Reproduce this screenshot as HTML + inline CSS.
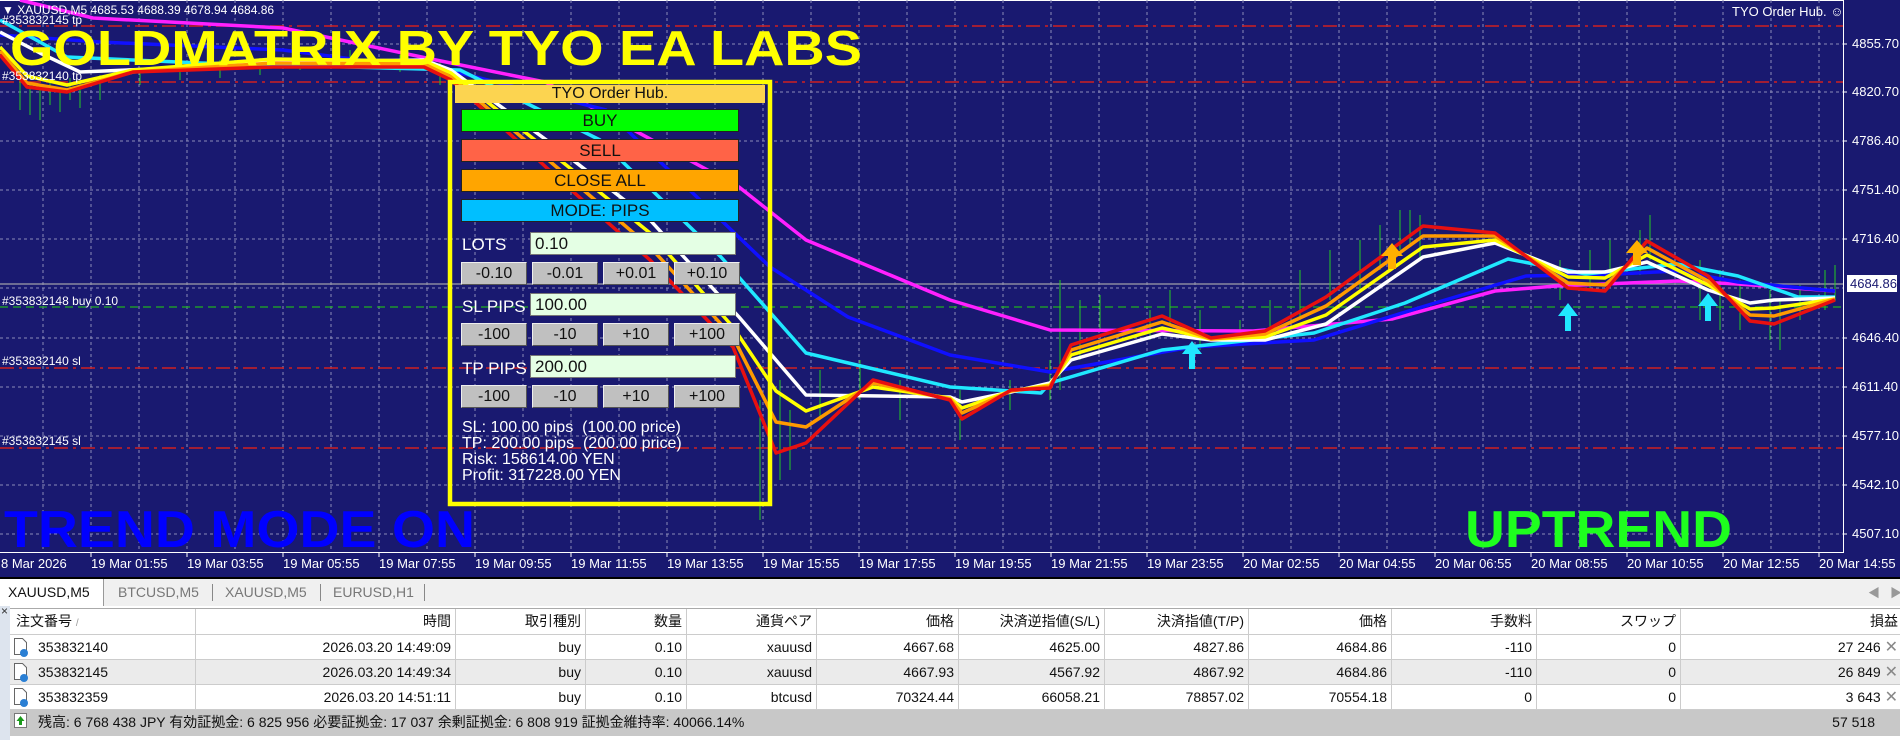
<!DOCTYPE html>
<html><head><meta charset="utf-8">
<style>
*{margin:0;padding:0;box-sizing:border-box}
body{width:1900px;height:740px;overflow:hidden;background:#fff;font-family:"Liberation Sans","Noto Sans CJK JP",sans-serif;position:relative}
#chart{position:absolute;left:0;top:0}
.pn{position:absolute;font-family:"Liberation Sans",sans-serif;color:#111;text-align:center;font-size:17px}
.btn{position:absolute;left:461px;width:278px;height:23px;border:1px solid #222;line-height:21px}
.sb{position:absolute;width:66px;height:23px;background:#c0c0c0;border:1px solid #555;border-top-color:#eee;border-left-color:#eee;line-height:21px;font-size:16px}
.ed{position:absolute;left:530px;width:206px;height:23px;background:#e4ffe4;border:1px solid #777;text-align:left;padding-left:4px;line-height:22px;font-size:17px}
.lb{position:absolute;left:462px;color:#fff;font-size:17px}
#tabs{position:absolute;left:0;top:577px;width:1900px;height:29px;background:#f0f0f0;border-top:2px solid #000;font-size:14px;color:#777}
#tabs span{position:absolute;top:5px}
#tbl{position:absolute;left:10px;top:608px;width:1890px;font-size:14px;color:#111}
.row{position:absolute;left:0;width:1890px;height:25px;border-bottom:1px solid #ccc}
.row div{position:absolute;top:0;height:25px;line-height:25px;text-align:right;border-right:1px solid #ccc;padding-right:4px}
</style></head><body>
<svg id="chart" width="1900" height="577" xmlns="http://www.w3.org/2000/svg" font-family="Liberation Sans, sans-serif">
<rect x="0" y="0" width="1900" height="577" fill="#191970"/>
<line x1="0" y1="0.5" x2="1843" y2="0.5" stroke="#fff"/>
<g stroke="#8a8ab8" stroke-width="1" stroke-dasharray="3,3">
<path d="M43 0V552M91 0V552M139 0V552M187 0V552M235 0V552M283 0V552M331 0V552M379 0V552M427 0V552M475 0V552M523 0V552M571 0V552M619 0V552M667 0V552M715 0V552M763 0V552M811 0V552M859 0V552M907 0V552M955 0V552M1003 0V552M1051 0V552M1099 0V552M1147 0V552M1195 0V552M1243 0V552M1291 0V552M1339 0V552M1387 0V552M1435 0V552M1483 0V552M1531 0V552M1579 0V552M1627 0V552M1675 0V552M1723 0V552M1771 0V552M1819 0V552"/>
<path d="M0 44H1843M0 92H1843M0 141H1843M0 190H1843M0 239H1843M0 288H1843M0 338H1843M0 387H1843M0 436H1843M0 485H1843M0 534H1843"/>
</g>
<g stroke="#d02020" stroke-width="1.5" stroke-dasharray="14,5,3,5" fill="none">
<path d="M0 26H1843M0 82H1843M0 368H1843M0 448H1843"/>
</g>
<path d="M0 307H1843" stroke="#20b020" stroke-width="1.3" stroke-dasharray="8,5"/>
<path d="M0 284H1843" stroke="#a0a0a8" stroke-width="1.3"/>
<!-- candles -->
<g stroke="#22cc22" stroke-width="1">
<path d="M20 80V110M30 85V115M40 90V120M50 80V105M60 90V112M70 78V100M80 82V108M100 75V100M140 68V85M180 60V80M220 60V78M260 58V75M300 55V70M350 50V65M400 55V72M440 62V85M760 400V520M770 420V500M780 380V480M790 410V470M820 370V420M860 360V400M900 380V420M960 390V440M1010 380V410M1050 360V400M1060 280V390M1080 300V360M1100 295V330M1150 310V340M1170 290V325M1200 310V350M1240 320V345M1270 300V340M1300 270V320M1330 250V300M1360 240V290M1380 225V270M1400 210V250M1410 210V245M1420 215V260M1560 260V300M1590 250V290M1610 240V285M1640 230V275M1650 215V260M1700 260V320M1720 270V330M1740 280V330M1770 290V340M1780 300V350M1800 285V320M1825 270V310M1835 265V300"/>
</g>
<g fill="none" stroke-width="3.5" stroke-linejoin="round">
<polyline stroke="#ff20ff" points="20,0 93,18 283,28 436,60 545,82 739,187 806,240 950,300 1050,330 1253,331 1392,319 1495,291 1556,286 1677,281 1738,284 1835,291"/>
<polyline stroke="#1010ff" points="0,35 100,42 283,50 460,73 606,110 770,267 848,317 950,355 1050,372 1192,347 1314,340 1435,303 1526,276 1617,274 1677,271 1738,282 1835,291"/>
<polyline stroke="#20e8ff" points="0,20 67,57 200,63 460,70 600,140 721,257 806,353 950,387 1041,393 1050,383 1162,350 1314,333 1405,303 1508,259 1586,274 1677,264 1738,276 1798,297 1835,297"/>
<polyline stroke="#ffffff" points="0,32 40,53 80,72 200,67 273,62 424,60 451,70 560,150 650,220 739,317 806,395 950,397 962,402 1011,392 1050,383 1071,360 1162,334 1211,340 1265,340 1326,324 1423,257 1495,243 1568,272 1605,272 1647,262 1708,290 1750,303 1774,300 1835,298"/>
<polyline stroke="#ffff00" points="0,47 27,76 67,85 133,70 273,59 424,61 451,73 560,160 650,233 733,327 776,391 806,411 873,387 950,398 962,408 1011,391 1050,385 1071,355 1162,328 1211,339 1265,337 1326,315 1423,247 1495,240 1568,277 1605,278 1647,255 1708,285 1750,309 1774,308 1835,299"/>
<polyline stroke="#ff9a00" points="0,51 27,83 67,90 133,72 273,63 424,64 451,77 560,170 650,247 733,337 776,422 806,427 873,383 950,399 962,413 1011,391 1050,386 1071,350 1162,322 1211,339 1265,334 1326,306 1423,236 1495,236 1568,283 1605,285 1647,248 1708,281 1750,315 1774,316 1835,299"/>
<polyline stroke="#e81010" points="0,55 27,87 67,92 133,72 273,67 424,67 451,80 560,180 650,260 733,347 776,453 806,443 873,380 950,400 962,419 1011,390 1050,388 1071,345 1162,316 1211,338 1265,331 1326,297 1423,226 1495,233 1568,288 1605,291 1647,241 1708,276 1750,321 1774,324 1835,300"/>
</g>
<!-- arrows -->
<g fill="#20e8ff">
<path d="M1192 341l-10 13h7v15h6v-15h7z"/><path d="M1568 303l-10 13h7v15h6v-15h7z"/><path d="M1708 293l-10 13h7v15h6v-15h7z"/>
</g>
<g fill="#ffb000">
<path d="M1392 243l-11 13h7v13h8v-13h7z"/><path d="M1637 240l-11 13h7v12h8v-12h7z"/>
</g>
<!-- axis -->
<line x1="1843.5" y1="0" x2="1843.5" y2="552" stroke="#fff"/>
<line x1="0" y1="552.5" x2="1844" y2="552.5" stroke="#fff"/>
<g fill="#fff" font-size="13">
<text x="1852" y="48">4855.70</text><text x="1852" y="96">4820.70</text><text x="1852" y="145">4786.40</text><text x="1852" y="194">4751.40</text><text x="1852" y="243">4716.40</text><text x="1852" y="342">4646.40</text><text x="1852" y="391">4611.40</text><text x="1852" y="440">4577.10</text><text x="1852" y="489">4542.10</text><text x="1852" y="538">4507.10</text>
</g>
<rect x="1847" y="275" width="50" height="17" fill="#fff"/>
<text x="1850" y="288" font-size="13" fill="#191970">4684.86</text>
<g stroke="#fff"><path d="M1843 44h4M1843 92h4M1843 141h4M1843 190h4M1843 239h4M1843 338h4M1843 387h4M1843 436h4M1843 485h4M1843 534h4M91 552v5M187 552v5M283 552v5M379 552v5M475 552v5M571 552v5M667 552v5M763 552v5M859 552v5M955 552v5M1051 552v5M1147 552v5M1243 552v5M1339 552v5M1435 552v5M1531 552v5M1627 552v5M1723 552v5M1819 552v5"/></g>
<g fill="#fff" font-size="13">
<text x="1" y="568">8 Mar 2026</text><text x="91" y="568">19 Mar 01:55</text><text x="187" y="568">19 Mar 03:55</text><text x="283" y="568">19 Mar 05:55</text><text x="379" y="568">19 Mar 07:55</text><text x="475" y="568">19 Mar 09:55</text><text x="571" y="568">19 Mar 11:55</text><text x="667" y="568">19 Mar 13:55</text><text x="763" y="568">19 Mar 15:55</text><text x="859" y="568">19 Mar 17:55</text><text x="955" y="568">19 Mar 19:55</text><text x="1051" y="568">19 Mar 21:55</text><text x="1147" y="568">19 Mar 23:55</text><text x="1243" y="568">20 Mar 02:55</text><text x="1339" y="568">20 Mar 04:55</text><text x="1435" y="568">20 Mar 06:55</text><text x="1531" y="568">20 Mar 08:55</text><text x="1627" y="568">20 Mar 10:55</text><text x="1723" y="568">20 Mar 12:55</text><text x="1819" y="568">20 Mar 14:55</text>
</g>
<g fill="#fff" font-size="12">
<text x="2" y="14">▼ XAUUSD,M5  4685.53 4688.39 4678.94 4684.86</text>
<text x="2" y="24">#353832145 tp</text>
<text x="2" y="80">#353832140 tp</text>
<text x="2" y="305">#353832148 buy 0.10</text>
<text x="2" y="365">#353832140 sl</text>
<text x="2" y="445">#353832145 sl</text>
<text x="1732" y="16" font-size="13">TYO Order Hub. ☺</text>
</g>
<text x="10" y="65" font-size="49" font-weight="bold" fill="#ffff00" textLength="852" lengthAdjust="spacingAndGlyphs">GOLDMATRIX BY TYO EA LABS</text>
<text x="4" y="547" font-size="52" font-weight="bold" fill="#0000ff" textLength="471" lengthAdjust="spacingAndGlyphs">TREND MODE ON</text>
<text x="1465" y="547" font-size="52" font-weight="bold" fill="#1eff1e" textLength="267" lengthAdjust="spacingAndGlyphs">UPTREND</text>
<!-- panel frame -->
<rect x="450" y="82" width="320" height="422" fill="none" stroke="#ffff00" stroke-width="4.5"/>
<rect x="455" y="85" width="310" height="18" fill="#fcd450"/>
</svg>

<div class="pn" style="left:455px;top:84px;width:310px;height:19px;line-height:19px;font-size:16px">TYO Order Hub.</div>
<div class="pn btn" style="top:109px;background:#00ff00">BUY</div>
<div class="pn btn" style="top:139px;background:#ff6347">SELL</div>
<div class="pn btn" style="top:169px;background:#ffa500">CLOSE ALL</div>
<div class="pn btn" style="top:199px;background:#00bfff">MODE: PIPS</div>
<div class="pn lb" style="top:235px">LOTS</div>
<div class="pn ed" style="top:232px">0.10</div>
<div class="pn sb" style="left:461px;top:262px">-0.10</div><div class="pn sb" style="left:532px;top:262px">-0.01</div><div class="pn sb" style="left:603px;top:262px">+0.01</div><div class="pn sb" style="left:674px;top:262px">+0.10</div>
<div class="pn lb" style="top:297px">SL PIPS</div>
<div class="pn ed" style="top:293px">100.00</div>
<div class="pn sb" style="left:461px;top:323px">-100</div><div class="pn sb" style="left:532px;top:323px">-10</div><div class="pn sb" style="left:603px;top:323px">+10</div><div class="pn sb" style="left:674px;top:323px">+100</div>
<div class="pn lb" style="top:359px">TP PIPS</div>
<div class="pn ed" style="top:355px">200.00</div>
<div class="pn sb" style="left:461px;top:385px">-100</div><div class="pn sb" style="left:532px;top:385px">-10</div><div class="pn sb" style="left:603px;top:385px">+10</div><div class="pn sb" style="left:674px;top:385px">+100</div>
<div class="pn" style="left:462px;top:420px;color:#fff;text-align:left;font-size:16px;line-height:16px;white-space:pre">SL: 100.00 pips  (100.00 price)
TP: 200.00 pips  (200.00 price)
Risk: 158614.00 YEN
Profit: 317228.00 YEN</div>

<div id="tabs">
<div style="position:absolute;left:0;top:0;width:104px;height:27px;background:#fff;border-right:1px solid #999"></div>
<span style="left:8px;color:#111">XAUUSD,M5</span>
<span style="left:118px">BTCUSD,M5</span>
<div style="position:absolute;left:212px;top:5px;height:17px;border-left:1px solid #888"></div>
<span style="left:225px">XAUUSD,M5</span>
<div style="position:absolute;left:320px;top:5px;height:17px;border-left:1px solid #888"></div>
<span style="left:333px">EURUSD,H1</span>
<div style="position:absolute;left:424px;top:5px;height:17px;border-left:1px solid #888"></div>
<span style="left:1868px;font-size:12px;color:#999">◀</span><span style="left:1890px;font-size:12px;color:#999">▶</span>
</div>
<div style="position:absolute;left:0;top:606px;width:10px;height:134px;background:#dde4ee"></div>
<div style="position:absolute;left:1px;top:604px;font-size:12px;color:#333">×</div>

<div id="tbl">
<div class="row" style="top:0;height:27px;background:#fff;border-top:1px solid #aaa">
<div style="left:0;width:186px;text-align:left;padding-left:6px">注文番号 <span style="color:#999;font-size:10px">/</span></div>
<div style="left:186px;width:260px">時間</div><div style="left:446px;width:130px">取引種別</div><div style="left:576px;width:101px">数量</div><div style="left:677px;width:130px">通貨ペア</div><div style="left:807px;width:142px">価格</div><div style="left:949px;width:146px">決済逆指値(S/L)</div><div style="left:1095px;width:144px">決済指値(T/P)</div><div style="left:1239px;width:143px">価格</div><div style="left:1382px;width:145px">手数料</div><div style="left:1527px;width:144px">スワップ</div><div style="left:1671px;width:219px;border-right:none;padding-right:2px">損益</div>
</div>
<div class="row" style="top:27px;background:#fff">
<div style="left:0;width:186px;text-align:left;padding-left:28px">353832140</div>
<div style="left:186px;width:260px">2026.03.20 14:49:09</div><div style="left:446px;width:130px">buy</div><div style="left:576px;width:101px">0.10</div><div style="left:677px;width:130px">xauusd</div><div style="left:807px;width:142px">4667.68</div><div style="left:949px;width:146px">4625.00</div><div style="left:1095px;width:144px">4827.86</div><div style="left:1239px;width:143px">4684.86</div><div style="left:1382px;width:145px">-110</div><div style="left:1527px;width:144px">0</div><div style="left:1671px;width:219px;border-right:none;padding-right:2px">27 246 <span style="color:#888;font-size:16px">✕</span></div>
</div>
<div class="row" style="top:52px;background:#ebebeb">
<div style="left:0;width:186px;text-align:left;padding-left:28px">353832145</div>
<div style="left:186px;width:260px">2026.03.20 14:49:34</div><div style="left:446px;width:130px">buy</div><div style="left:576px;width:101px">0.10</div><div style="left:677px;width:130px">xauusd</div><div style="left:807px;width:142px">4667.93</div><div style="left:949px;width:146px">4567.92</div><div style="left:1095px;width:144px">4867.92</div><div style="left:1239px;width:143px">4684.86</div><div style="left:1382px;width:145px">-110</div><div style="left:1527px;width:144px">0</div><div style="left:1671px;width:219px;border-right:none;padding-right:2px">26 849 <span style="color:#888;font-size:16px">✕</span></div>
</div>
<div class="row" style="top:77px;background:#fff">
<div style="left:0;width:186px;text-align:left;padding-left:28px">353832359</div>
<div style="left:186px;width:260px">2026.03.20 14:51:11</div><div style="left:446px;width:130px">buy</div><div style="left:576px;width:101px">0.10</div><div style="left:677px;width:130px">btcusd</div><div style="left:807px;width:142px">70324.44</div><div style="left:949px;width:146px">66058.21</div><div style="left:1095px;width:144px">78857.02</div><div style="left:1239px;width:143px">70554.18</div><div style="left:1382px;width:145px">0</div><div style="left:1527px;width:144px">0</div><div style="left:1671px;width:219px;border-right:none;padding-right:2px">3 643 <span style="color:#888;font-size:16px">✕</span></div>
</div>
<div class="row" style="top:102px;height:26px;background:#c8c8c8;border:none">
<div style="left:0;width:1890px;text-align:left;border:none;padding-left:28px">残高: 6 768 438 JPY  有効証拠金: 6 825 956  必要証拠金: 17 037  余剰証拠金: 6 808 919  証拠金維持率: 40066.14%</div>
<div style="left:1780px;width:85px;border:none;padding-right:0">57 518</div>
</div>
</div>
<!-- row icons -->
<svg style="position:absolute;left:12px;top:637px" width="20" height="100" xmlns="http://www.w3.org/2000/svg">
<g fill="#fff" stroke="#666" stroke-width="1">
<path d="M2.5 1.5h8l4 4v12h-12z"/><path d="M2.5 26.5h8l4 4v12h-12z"/><path d="M2.5 51.5h8l4 4v12h-12z"/>
</g>
<g fill="#2a7fd4"><circle cx="12" cy="16" r="4"/><circle cx="12" cy="41" r="4"/><circle cx="12" cy="66" r="4"/></g>
<rect x="2.5" y="76.5" width="12" height="14" fill="#fff" stroke="#777"/>
<path d="M8.5 79l-4 5h2.5v4h3v-4h2.5z" fill="#1a9a1a"/>
</svg>
</body></html>
